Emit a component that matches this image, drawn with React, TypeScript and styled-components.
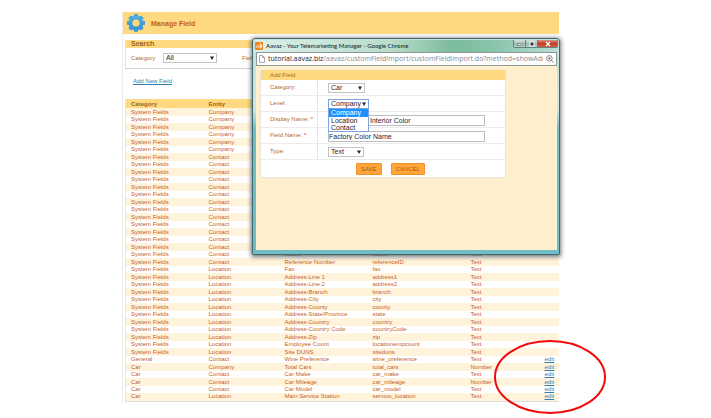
import React from "react";
import styled, { createGlobalStyle } from "styled-components";

const Global = createGlobalStyle`
  *, *::before, *::after { box-sizing: border-box; }
  body { margin: 0; background: #fff; font-family: "Liberation Sans", Arial, sans-serif; font-size: 6px; color: #b06a35; }
  input, select, button { font-family: inherit; margin: 0; }
`;

const Page = styled.div`
  padding: 12px 152px 15px 122px;
`;

const Panel = styled.main`
  position: relative;
  border-left: 1px solid #ececec;
  padding-bottom: 2px;
`;

const PageHeader = styled.header`
  display: flex;
  align-items: center;
  gap: 6px;
  height: 22px;
  padding-left: 4px;
  background: #ffd980;
`;

const PageTitle = styled.h1`
  margin: 0;
  padding-top: 1px;
  font-size: 7px;
  line-height: 10px;
  font-weight: bold;
  color: #c9600c;
`;

const Content = styled.div`
  padding: 6px 0 0 2px;
`;

const SearchBox = styled.section`
  border-left: 1px solid #e2e2e2;
  border-bottom: 1px solid #d2d2d2;
`;

const SearchTitle = styled.h2`
  margin: 0;
  padding-left: 5px;
  font-size: 7px;
  line-height: 8px;
  color: #96631f;
  background: #ffd980;
`;

const SearchRow = styled.div`
  display: flex;
  align-items: center;
  height: 20px;
  padding-left: 5px;
`;

const SearchLabel = styled.label`
  width: 32px;
`;

const FieldCaption = styled.span`
  padding-left: 25px;
`;

const SelectWrap = styled.span<{ $width: number; $active?: boolean }>`
  position: relative;
  display: flex;
  align-items: center;
  width: ${(p) => p.$width}px;
  height: 10px;
  border: 1px solid ${(p) => (p.$active ? "#7ba3e0" : "#c4c4c4")};
  background: #fff;
`;

const Select = styled.select`
  appearance: none;
  width: 100%;
  height: 8px;
  padding: 0 0 0 2px;
  border: 0;
  outline: 0;
  background: transparent;
  font-size: 7px;
  line-height: 8px;
  color: #2b2233;
`;

const Arrow = styled.svg`
  position: absolute;
  right: 2px;
  width: 4px;
  height: 4px;
  pointer-events: none;
`;

const AddLink = styled.a`
  display: block;
  width: fit-content;
  margin: 8px 0 14px 8px;
  line-height: 8px;
  color: #2f7fae;
`;

const FieldTable = styled.table`
  width: 100%;
  table-layout: fixed;
  border-collapse: collapse;
  border-left: 1px solid #e6e6e6;
  border-bottom: 1px solid #dcdcdc;
`;

const Col = styled.col<{ $width?: number }>`
  width: ${(p) => (p.$width ? `${p.$width}px` : "auto")};
`;

const HeadCell = styled.th`
  height: 9px;
  padding: 0 0 0 5px;
  text-align: left;
  line-height: 8px;
  color: #96631f;
  background: #ffd980;
`;

const Row = styled.tr`
  height: 7px;
  line-height: 7px;
  &:nth-child(odd) { height: 8px; background: #fff3dc; }
`;

const Cell = styled.td`
  padding: 0 0 0 5px;
  white-space: nowrap;
  color: #c4622a;
`;

const EditLink = styled.a`
  color: #2f7fae;
`;

const Highlight = styled.svg`
  position: absolute;
  right: -47px;
  bottom: -10px;
  width: 112px;
  height: 74px;
  pointer-events: none;
`;

const Popup = styled.section`
  position: absolute;
  top: 26px;
  left: 129px;
  right: -1px;
  display: flex;
  flex-direction: column;
  height: 217px;
  padding: 1px 2px 4px 3px;
  border: 1px solid #3f6a70;
  border-radius: 3px 3px 1px 1px;
  background: linear-gradient(#c5e2d8 0, #c9e8e6 70px, #72bcc6 90px, #72bcc6 100%);
  box-shadow: 0 1px 4px 1px rgba(40, 40, 40, 0.65);
`;

const TitleBar = styled.header`
  display: flex;
  align-items: center;
  gap: 3px;
  height: 12px;
  margin: 0 -1px;
  background: linear-gradient(90deg, #dcefe8 0, #b9dccb 45%, #7cbb9d 65%, #8ac5ac 80%, #b9dfd8 100%);
`;

const WindowTitle = styled.h2`
  flex: 1;
  margin: 0;
  overflow: hidden;
  white-space: nowrap;
  font-family: Lato, sans-serif;
  font-size: 6px;
  line-height: 10px;
  font-weight: 500;
  color: #1d2f2b;
`;

const WindowButtons = styled.div`
  display: flex;
  align-self: flex-start;
  height: 8px;
  border: 1px solid #64837e;
  border-top: 0;
  border-radius: 0 0 2px 2px;
  overflow: hidden;
`;

const WindowButton = styled.button<{ $close?: boolean }>`
  display: flex;
  align-items: center;
  justify-content: center;
  width: ${(p) => (p.$close ? 19 : 12)}px;
  padding: 0;
  border: 0;
  border-right: ${(p) => (p.$close ? "0" : "1px solid #64837e")};
  background: ${(p) =>
    p.$close ? "linear-gradient(#dc9a88, #c13a22 50%, #cf6046)" : "linear-gradient(#d4e4de, #9fbdb4 50%, #b6d2ca)"};
`;

const AddressBar = styled.div`
  display: flex;
  align-items: center;
  gap: 3px;
  height: 14px;
  padding: 0 2px;
  border: 1px solid #8b9a99;
  background: #fff;
`;

const Address = styled.span`
  flex: 1;
  overflow: hidden;
  white-space: nowrap;
  font-family: "Open Sans", sans-serif;
  font-size: 7px;
  line-height: 12px;
  color: #8a8a8a;
`;

const Host = styled.span`
  color: #1e1e1e;
`;

const PopupBody = styled.div`
  flex: 1;
  padding: 4px 51px 0 4px;
  background: #ffefcf;
`;

const Form = styled.form`
  border: 1px solid #e8e4dc;
  border-top: 0;
  background: #fff;
`;

const FormTitle = styled.h3`
  margin: 0;
  padding-left: 9px;
  font-size: 6px;
  font-weight: normal;
  line-height: 10px;
  color: #a46a2a;
  background: #ffd980;
`;

const FormRow = styled.div`
  display: grid;
  grid-template-columns: 57px 1fr;
  height: 16px;
  border-bottom: 1px solid #ececec;
`;

const FormLabel = styled.label`
  padding-left: 9px;
  border-right: 1px solid #e4e4e4;
  line-height: 15px;
  white-space: nowrap;
`;

const Required = styled.span`
  color: #f03020;
`;

const Control = styled.div<{ $low?: boolean }>`
  display: flex;
  align-items: ${(p) => (p.$low ? "flex-end" : "center")};
  padding: 0 20px ${(p) => (p.$low ? 1 : 0)}px 10px;
`;

const TextInput = styled.input<{ $indent: number }>`
  width: 100%;
  height: 11px;
  padding: 0 0 0 ${(p) => p.$indent}px;
  border: 1px solid #bdbdbd;
  font-size: 7px;
  line-height: 9px;
  color: #2b2233;
`;

const Options = styled.ul`
  position: absolute;
  z-index: 1;
  top: 9px;
  left: -1px;
  right: -1px;
  margin: 0;
  padding: 0;
  border: 1px solid #7ba3e0;
  border-top: 0;
  background: #fff;
  list-style: none;
`;

const Option = styled.li<{ $selected?: boolean }>`
  padding-left: 2px;
  font-size: 7px;
  line-height: 7px;
  &:first-child { line-height: 8px; }
  color: ${(p) => (p.$selected ? "#fff" : "#2b2233")};
  background: ${(p) => (p.$selected ? "#1e90ff" : "#fff")};
`;

const Actions = styled.div`
  display: flex;
  justify-content: center;
  align-items: center;
  gap: 9px;
  height: 17px;
  padding-left: 15px;
`;

const ActionButton = styled.button`
  height: 12px;
  padding: 0 4px;
  border: 1px solid #f0912a;
  border-radius: 1px;
  background: #ffa53a;
  font-size: 6px;
  line-height: 8px;
  color: #a8600f;
`;

type Field = [category: string, entity: string, label?: string, name?: string, type?: string];

const repeat = (count: number, entity: string): Field[] =>
  Array.from({ length: count }, () => ["System Fields", entity] as Field);

const fields: Field[] = [
  ...repeat(6, "Company"),
  ...repeat(13, "Contact"),
  ["System Fields", "Contact", "Notes", "notes", "Text"],
  ["System Fields", "Contact", "Reference Number", "referenceID", "Text"],
  ["System Fields", "Location", "Fax", "fax", "Text"],
  ["System Fields", "Location", "Address-Line 1", "address1", "Text"],
  ["System Fields", "Location", "Address-Line 2", "address2", "Text"],
  ["System Fields", "Location", "Address-Branch", "branch", "Text"],
  ["System Fields", "Location", "Address-City", "city", "Text"],
  ["System Fields", "Location", "Address-County", "county", "Text"],
  ["System Fields", "Location", "Address-State/Province", "state", "Text"],
  ["System Fields", "Location", "Address-Country", "country", "Text"],
  ["System Fields", "Location", "Address-Country Code", "countryCode", "Text"],
  ["System Fields", "Location", "Address-Zip", "zip", "Text"],
  ["System Fields", "Location", "Employee Count", "locationempcount", "Text"],
  ["System Fields", "Location", "Site DUNS", "siteduns", "Text"],
  ["General", "Contact", "Wine Preference", "wine_preference", "Text"],
  ["Car", "Company", "Total Cars", "total_cars", "Number"],
  ["Car", "Contact", "Car Make", "car_make", "Text"],
  ["Car", "Contact", "Car Mileage", "car_mileage", "Number"],
  ["Car", "Contact", "Car Model", "car_model", "Text"],
  ["Car", "Location", "Main Service Station", "service_location", "Text"],
];

const teeth = [0, 45, 90, 135, 180, 225, 270, 315];

function Gear() {
  return (
    <svg width="18" height="20" viewBox="-9 -10 18 20" aria-hidden="true">
      <defs>
        <linearGradient id="gear" x1="0" y1="-9" x2="0" y2="9" gradientUnits="userSpaceOnUse">
          <stop offset="0" stopColor="#55b4e4" />
          <stop offset="1" stopColor="#2f8ccc" />
        </linearGradient>
      </defs>
      {teeth.map((a) => (
        <path key={a} fill="#409fd8" d="M-2.6 -5.5L-1.9 -8.8Q0 -9.2 1.9 -8.8L2.6 -5.5Z" transform={`rotate(${a})`} />
      ))}
      <path
        fill="url(#gear)"
        fillRule="evenodd"
        d="M0 -7.2A7.2 7.2 0 1 1 0 7.2A7.2 7.2 0 1 1 0 -7.2ZM0 -3.6A3.6 3.6 0 1 0 0 3.6A3.6 3.6 0 1 0 0 -3.6Z"
      />
    </svg>
  );
}

function Dropdown(props: {
  id: string;
  value: string;
  width: number;
  active?: boolean;
  children?: React.ReactNode;
}) {
  return (
    <SelectWrap $width={props.width} $active={props.active}>
      <Select id={props.id} defaultValue={props.value}>
        <option>{props.value}</option>
      </Select>
      <Arrow viewBox="0 0 4 4" aria-hidden="true">
        <path d="M0 0.5H4L2 4Z" fill="#222" />
      </Arrow>
      {props.children}
    </SelectWrap>
  );
}

function AddFieldWindow() {
  return (
    <Popup>
      <TitleBar>
        <svg width="8" height="8" viewBox="0 0 8 8" aria-hidden="true">
          <rect width="8" height="8" rx="1" fill="#f58220" />
          <path d="M1.5 5.5C1.5 3 3.5 3 3.5 5.5M5.2 1.5V6.5M6.6 2.5V5.5" stroke="#fff" fill="none" />
        </svg>
        <WindowTitle>Aavaz - Your Telemarketing Manager - Google Chrome</WindowTitle>
        <WindowButtons>
          <WindowButton type="button" aria-label="Minimize">
            <svg width="6" height="4" viewBox="0 0 6 4"><rect x="0.5" y="2" width="5" height="1.5" fill="#fff" stroke="#445" strokeWidth="0.5" /></svg>
          </WindowButton>
          <WindowButton type="button" aria-label="Maximize">
            <svg width="6" height="6" viewBox="0 0 6 6"><rect x="1" y="1" width="4" height="4" fill="#334" stroke="#fff" /></svg>
          </WindowButton>
          <WindowButton type="button" aria-label="Close" $close>
            <svg width="6" height="6" viewBox="0 0 6 6"><path d="M1 1L5 5M5 1L1 5" stroke="#fff" strokeWidth="1.4" /></svg>
          </WindowButton>
        </WindowButtons>
      </TitleBar>
      <AddressBar>
        <svg width="6" height="8" viewBox="0 0 6 8" aria-hidden="true">
          <path d="M0.5 0.5H3.5L5.5 2.5V7.5H0.5ZM3.5 0.5V2.5H5.5" fill="none" stroke="#909090" strokeWidth="0.8" />
        </svg>
        <Address>
          <Host>tutorial.aavaz.biz</Host>/aavaz/customFieldImport/customFieldImport.do?method=showAdd
        </Address>
        <svg width="8" height="8" viewBox="0 0 8 8" aria-hidden="true">
          <circle cx="3.4" cy="3.4" r="2.8" fill="none" stroke="#777" strokeWidth="0.9" />
          <path d="M5.4 5.4L7.6 7.6M2 3.4H4.8M3.4 2V4.8" stroke="#777" strokeWidth="0.9" />
        </svg>
      </AddressBar>
      <PopupBody>
        <Form>
          <FormTitle>Add Field</FormTitle>
          <FormRow>
            <FormLabel htmlFor="category">Category:</FormLabel>
            <Control><Dropdown id="category" value="Car" width={37} /></Control>
          </FormRow>
          <FormRow>
            <FormLabel htmlFor="level">Level:</FormLabel>
            <Control>
              <Dropdown id="level" value="Company" width={41} active>
                <Options role="listbox" aria-label="Level">
                  <Option role="option" aria-selected $selected>Company</Option>
                  <Option role="option" aria-selected={false}>Location</Option>
                  <Option role="option" aria-selected={false}>Contact</Option>
                </Options>
              </Dropdown>
            </Control>
          </FormRow>
          <FormRow>
            <FormLabel htmlFor="display">Display Name: <Required>*</Required></FormLabel>
            <Control $low><TextInput id="display" defaultValue="Interior Color" $indent={41} /></Control>
          </FormRow>
          <FormRow>
            <FormLabel htmlFor="name">Field Name: <Required>*</Required></FormLabel>
            <Control $low><TextInput id="name" defaultValue="Factory Color Name" $indent={0} /></Control>
          </FormRow>
          <FormRow>
            <FormLabel htmlFor="type">Type:</FormLabel>
            <Control><Dropdown id="type" value="Text" width={36} /></Control>
          </FormRow>
          <Actions>
            <ActionButton type="button">SAVE</ActionButton>
            <ActionButton type="button">CANCEL</ActionButton>
          </Actions>
        </Form>
      </PopupBody>
    </Popup>
  );
}

export default function App() {
  return (
    <Page>
      <Global />
      <Panel>
        <PageHeader>
          <Gear />
          <PageTitle>Manage Field</PageTitle>
        </PageHeader>
        <Content>
          <SearchBox>
            <SearchTitle>Search</SearchTitle>
            <SearchRow>
              <SearchLabel htmlFor="search-category">Category</SearchLabel>
              <Dropdown id="search-category" value="All" width={54} />
              <FieldCaption>Field</FieldCaption>
            </SearchRow>
          </SearchBox>
          <AddLink href="#add">Add New Field</AddLink>
          <FieldTable>
            <colgroup>
              <Col $width={78} />
              <Col $width={76} />
              <Col $width={88} />
              <Col $width={98} />
              <Col $width={74} />
              <Col />
            </colgroup>
            <thead>
              <tr>
                <HeadCell>Category</HeadCell>
                <HeadCell>Entity</HeadCell>
                <HeadCell colSpan={4} />
              </tr>
            </thead>
            <tbody>
              {fields.map(([category, entity, label, name, type], i) => (
                <Row key={i}>
                  <Cell>{category}</Cell>
                  <Cell>{entity}</Cell>
                  <Cell>{label}</Cell>
                  <Cell>{name}</Cell>
                  <Cell>{type}</Cell>
                  <Cell>{category !== "System Fields" && <EditLink href="#edit">edit</EditLink>}</Cell>
                </Row>
              ))}
            </tbody>
          </FieldTable>
        </Content>
        <AddFieldWindow />
        <Highlight viewBox="0 0 112 74" aria-hidden="true">
          <ellipse cx="56" cy="37" rx="55" ry="36" fill="none" stroke="#f00a0a" strokeWidth="2" />
        </Highlight>
      </Panel>
    </Page>
  );
}
